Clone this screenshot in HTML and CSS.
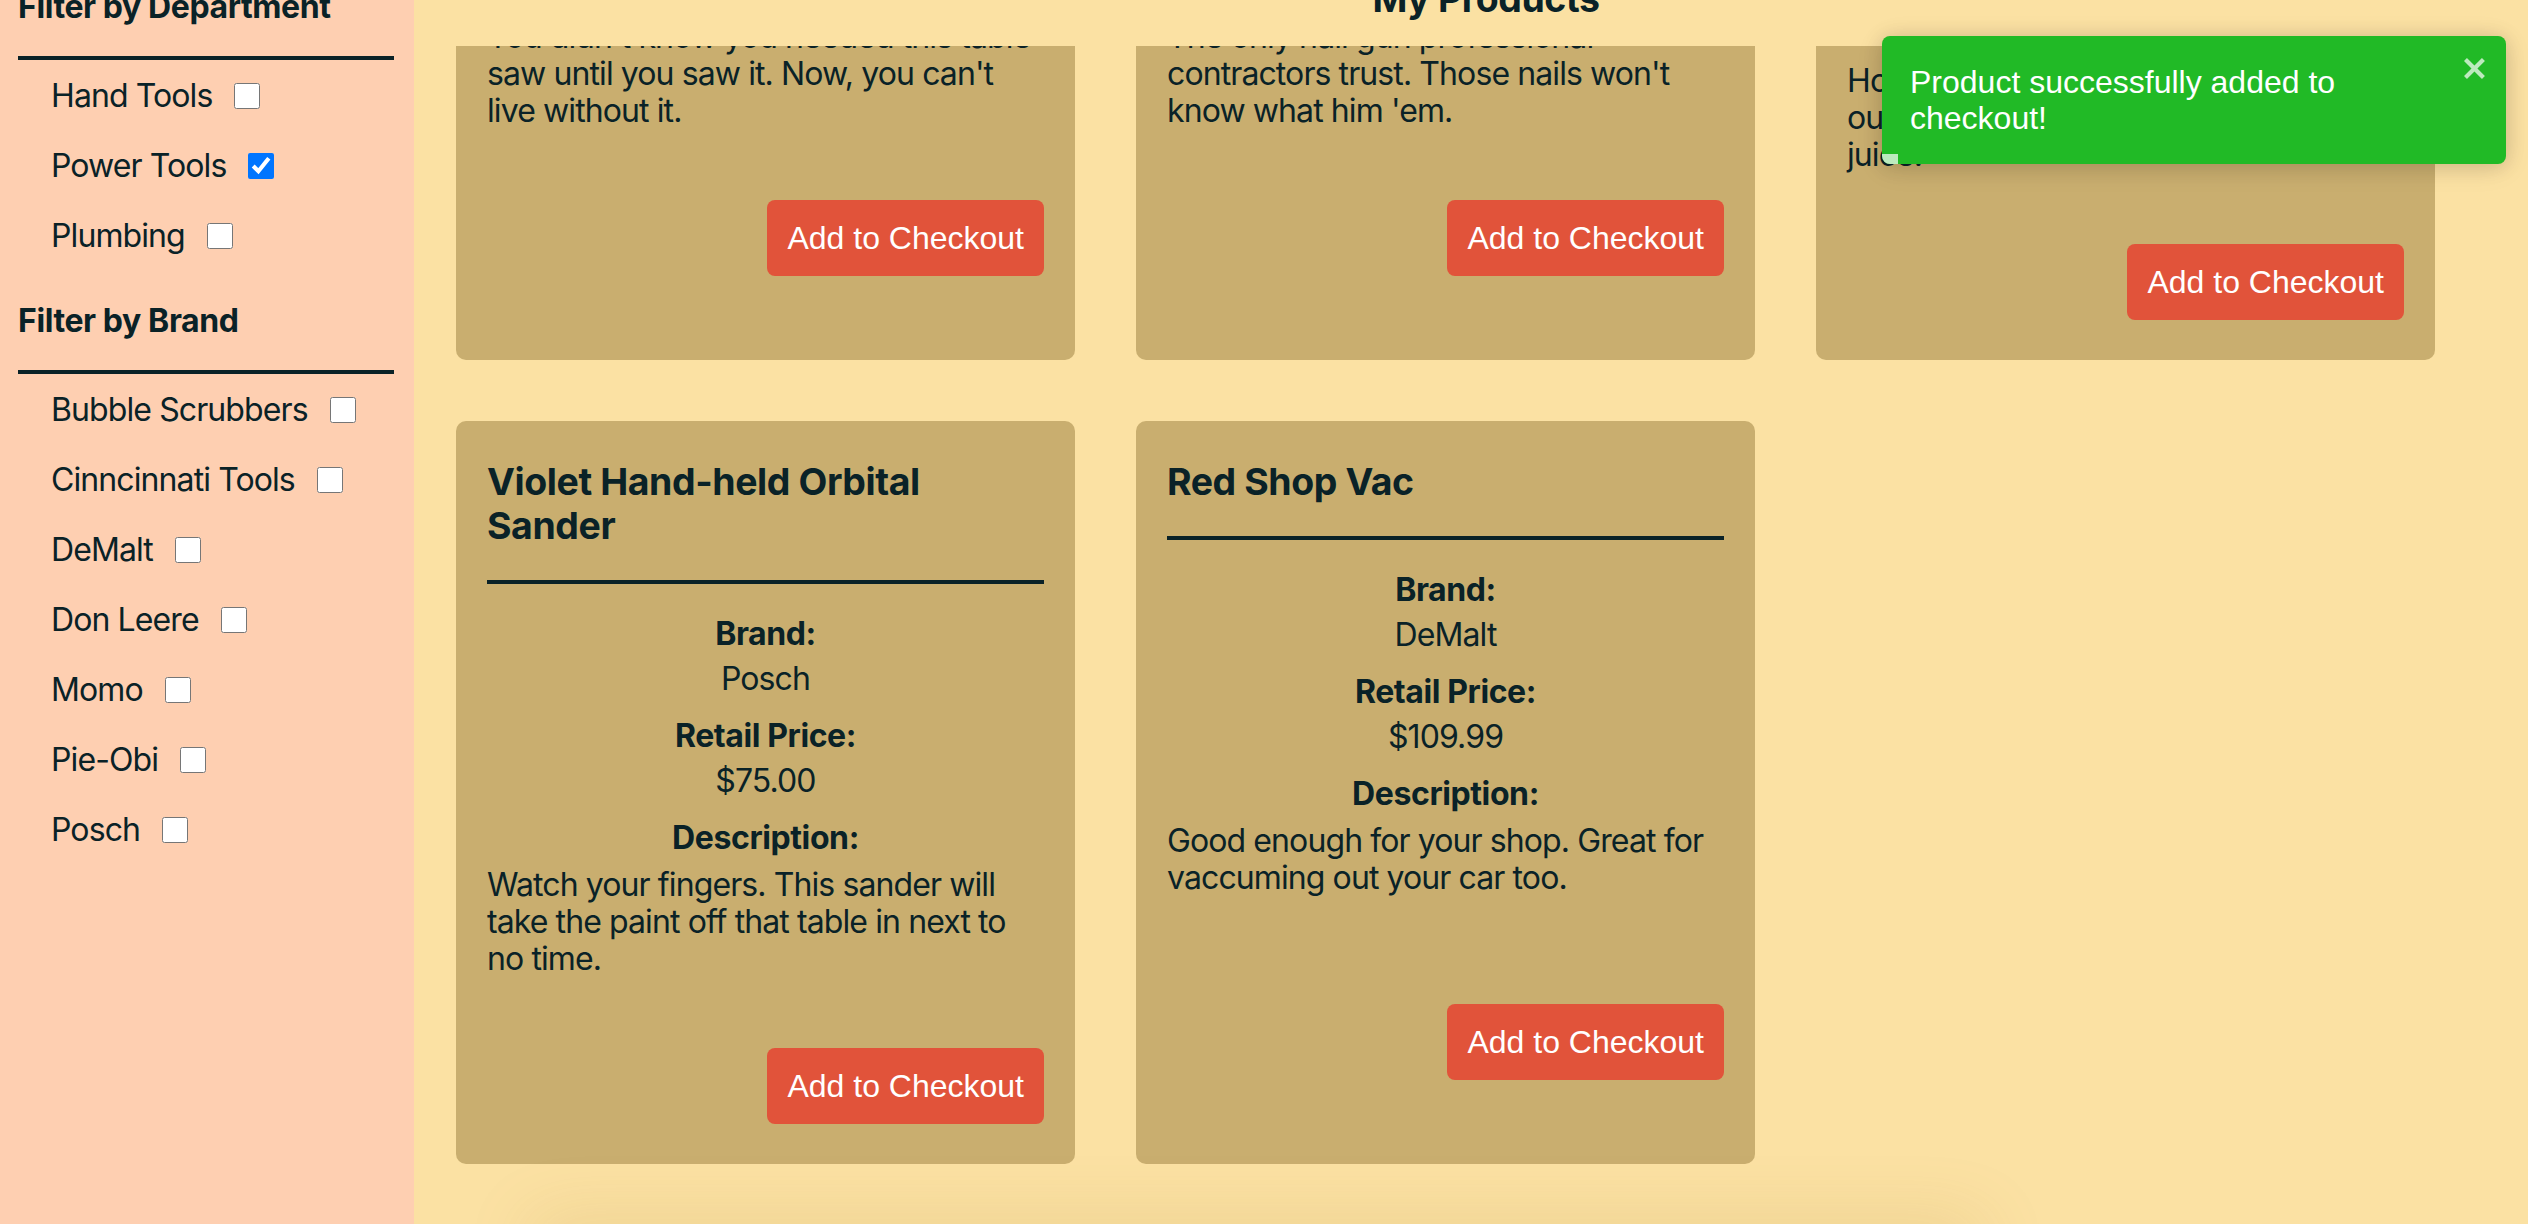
FILE: index.html
```html
<!DOCTYPE html>
<html lang="en">
<head>
<meta charset="utf-8">
<title>My Products</title>
<link rel="stylesheet" href="styles.css">
</head>
<body>
<div class="app">
  <aside class="sidebar">
    <div class="sidebar-inner">
      <h4 class="filter-title">Filter by Department</h4>
      <hr class="rule">
      <ul class="filter-list">
        <li class="filter-item"><label class="filter-label">Hand Tools <input class="filter-check" type="checkbox"></label></li>
        <li class="filter-item"><label class="filter-label">Power Tools <input class="filter-check" type="checkbox" checked></label></li>
        <li class="filter-item"><label class="filter-label">Plumbing <input class="filter-check" type="checkbox"></label></li>
      </ul>
      <h4 class="filter-title">Filter by Brand</h4>
      <hr class="rule">
      <ul class="filter-list">
        <li class="filter-item"><label class="filter-label">Bubble Scrubbers <input class="filter-check" type="checkbox"></label></li>
        <li class="filter-item"><label class="filter-label">Cinncinnati Tools <input class="filter-check" type="checkbox"></label></li>
        <li class="filter-item"><label class="filter-label">DeMalt <input class="filter-check" type="checkbox"></label></li>
        <li class="filter-item"><label class="filter-label">Don Leere <input class="filter-check" type="checkbox"></label></li>
        <li class="filter-item"><label class="filter-label">Momo <input class="filter-check" type="checkbox"></label></li>
        <li class="filter-item"><label class="filter-label">Pie-Obi <input class="filter-check" type="checkbox"></label></li>
        <li class="filter-item"><label class="filter-label">Posch <input class="filter-check" type="checkbox"></label></li>
      </ul>
    </div>
  </aside>

  <main class="main">
    <header class="main-header"><h2 class="page-title">My Products</h2></header>
    <div class="products">
      <div class="grid">
        <article class="card">
          <h3 class="card-title">Yellow Table Saw</h3>
          <hr class="card-rule">
          <div class="info">
            <p class="info-label">Brand:</p>
            <p class="info-value">DeMalt</p>
            <p class="info-label">Retail Price:</p>
            <p class="info-value">$349.99</p>
            <p class="info-label">Description:</p>
            <p class="desc">You didn't know you needed this table saw until you saw it. Now, you can't live without it.</p>
          </div>
          <div class="actions"><button class="btn">Add to Checkout</button></div>
        </article>

        <article class="card">
          <h3 class="card-title">Blue Nail Gun</h3>
          <hr class="card-rule">
          <div class="info">
            <p class="info-label">Brand:</p>
            <p class="info-value">Momo</p>
            <p class="info-label">Retail Price:</p>
            <p class="info-value">$129.00</p>
            <p class="info-label">Description:</p>
            <p class="desc">The only nail gun professional contractors trust. Those nails won't know what him 'em.</p>
          </div>
          <div class="actions"><button class="btn">Add to Checkout</button></div>
        </article>

        <article class="card">
          <h3 class="card-title">Green Electric Pressure Washer</h3>
          <hr class="card-rule">
          <div class="info">
            <p class="info-label">Brand:</p>
            <p class="info-value">Pie-Obi</p>
            <p class="info-label">Retail Price:</p>
            <p class="info-value">$199.99</p>
            <p class="info-label">Description:</p>
            <p class="desc">Hoses off decks, patios and walkways out back in minutes, with plenty of juice.</p>
          </div>
          <div class="actions"><button class="btn">Add to Checkout</button></div>
        </article>

        <article class="card">
          <h3 class="card-title">Violet Hand-held Orbital Sander</h3>
          <hr class="card-rule">
          <div class="info">
            <p class="info-label">Brand:</p>
            <p class="info-value">Posch</p>
            <p class="info-label">Retail Price:</p>
            <p class="info-value">$75.00</p>
            <p class="info-label">Description:</p>
            <p class="desc">Watch your fingers. This sander will take the paint off that table in next to no time.</p>
          </div>
          <div class="actions"><button class="btn">Add to Checkout</button></div>
        </article>

        <article class="card">
          <h3 class="card-title">Red Shop Vac</h3>
          <hr class="card-rule">
          <div class="info">
            <p class="info-label">Brand:</p>
            <p class="info-value">DeMalt</p>
            <p class="info-label">Retail Price:</p>
            <p class="info-value">$109.99</p>
            <p class="info-label">Description:</p>
            <p class="desc">Good enough for your shop. Great for vaccuming out your car too.</p>
          </div>
          <div class="actions"><button class="btn">Add to Checkout</button></div>
        </article>
      </div>
    </div>
  </main>

  <div class="toast" role="alert">
    <div class="toast-body">Product successfully added to checkout!</div>
    <button class="toast-close" aria-label="close">
      <svg class="toast-close-icon" viewBox="0 0 14 16" width="28" height="32" aria-hidden="true"><path fill="currentColor" fill-rule="evenodd" d="M7.71 8.23l3.75 3.75-1.48 1.48-3.75-3.75-3.75 3.75L1 11.98l3.75-3.75L1 4.48 2.48 3l3.75 3.75L9.98 3l1.48 1.48-3.75 3.75z"/></svg>
    </button>
    <div class="toast-progress"></div>
  </div>
</div>
</body>
</html>
```

FILE: styles.css
```css
* { box-sizing: border-box; }

html, body {
  margin: 0;
  height: 100%;
}

body {
  font-family: Inter, "Noto Sans", "Liberation Sans", sans-serif;
  color: #0a2227;
  letter-spacing: -0.9px;
  overflow: hidden;
}

.app {
  display: flex;
  height: 1224px;
  position: relative;
}

/* ---------- Sidebar ---------- */
.sidebar {
  width: 414px;
  flex: none;
  background: #fecfb1;
  padding: 0 20px 0 18px;
  overflow: hidden;
}

.sidebar-inner {
  margin-top: -13px;
}

.filter-title {
  font-size: 32px;
  font-weight: 700;
  line-height: 39px;
  letter-spacing: -0.4px;
  margin: 0 0 30px;
}

.rule {
  border: 0;
  border-top: 4px solid #0a2227;
  margin: 0;
}

.filter-list {
  list-style: none;
  margin: 16px 0 46px;
  padding: 0 0 0 33px;
  display: flex;
  flex-direction: column;
  gap: 31px;
}

.filter-item {
  height: 39px;
  display: flex;
  align-items: center;
  font-size: 32px;
  line-height: 39px;
}

.filter-label {
  display: inline-flex;
  align-items: center;
  gap: 22px;
}

.filter-check {
  width: 26px;
  height: 26px;
  margin: 0;
}

/* ---------- Main ---------- */
.main {
  flex: 1;
  display: flex;
  flex-direction: column;
  background: #fbe1a3;
  position: relative;
  overflow: hidden;
}

.main::after {
  content: "";
  position: absolute;
  left: 118px;
  width: 1450px;
  bottom: -40px;
  height: 40px;
  box-shadow: 0 0 70px rgba(160, 120, 40, 0.2);
}

.main-header {
  height: 46px;
  flex: none;
  overflow: hidden;
  padding-left: 30px;
}

.page-title {
  margin: -24px 0 0;
  text-align: center;
  font-size: 37.44px;
  font-weight: 700;
  line-height: 45px;
  letter-spacing: -0.4px;
}

.products {
  flex: 1;
  overflow: hidden;
  padding-left: 42px;
}

.grid {
  display: grid;
  grid-template-columns: repeat(3, 619px);
  gap: 61px;
  margin-top: -429px;
}

.card {
  background: #c9ae6f;
  border-radius: 10px;
  padding: 39px 31px 40px;
  display: flex;
  flex-direction: column;
}

.card-title {
  margin: 0;
  font-size: 37.44px;
  line-height: 44px;
  font-weight: 700;
  letter-spacing: -0.4px;
}

.card-rule {
  border: 0;
  border-top: 4px solid #0a2227;
  margin: 32px 0 31px;
}

.info {
  text-align: center;
  font-size: 32px;
}

.info-label {
  margin: 0;
  font-weight: 700;
  line-height: 38px;
  letter-spacing: -0.4px;
}

.info-value {
  margin: 7px 0 19px;
  line-height: 38px;
}

.desc {
  text-align: left;
  margin: 9px 0 0;
  line-height: 37px;
  min-height: 111px;
}

.actions {
  display: flex;
  justify-content: flex-end;
  margin-top: 71px;
}

.btn {
  font-family: "Liberation Sans", Arial, sans-serif;
  font-size: 32px;
  line-height: 36px;
  letter-spacing: 0;
  padding: 20px;
  border: 0;
  border-radius: 8px;
  background: #e1533a;
  color: #fff;
}

/* ---------- Toast ---------- */
.toast {
  position: absolute;
  top: 36px;
  right: 22px;
  width: 624px;
  min-height: 128px;
  padding: 16px;
  border-radius: 8px;
  background: #21ba26;
  color: #fff;
  display: flex;
  overflow: hidden;
  letter-spacing: 0;
  box-shadow: 0 2px 20px rgba(0, 0, 0, 0.14), 0 4px 30px rgba(0, 0, 0, 0.08);
  font-family: "Liberation Sans", Arial, sans-serif;
}

.toast-body {
  flex: 1;
  margin: auto 0;
  padding: 12px;
  font-size: 32px;
  line-height: 36px;
}

.toast-close {
  flex: none;
  width: 28px;
  height: 32px;
  align-self: flex-start;
  padding: 0;
  border: 0;
  background: none;
  color: #fff;
  opacity: 0.7;
}

.toast-close-icon {
  display: block;
}

.toast-progress {
  position: absolute;
  left: 0;
  bottom: 0;
  width: 16px;
  height: 10px;
  background: rgba(255, 255, 255, 0.7);
}
```
